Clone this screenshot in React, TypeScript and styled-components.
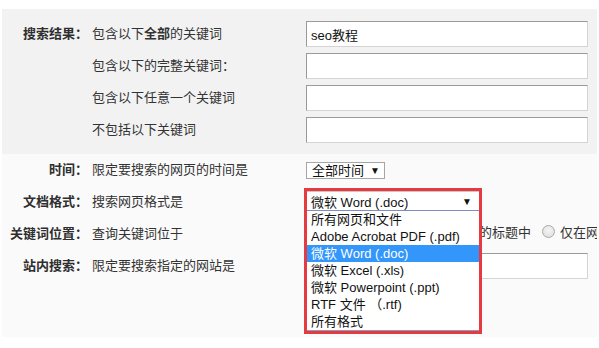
import React from "react";
import styled, { createGlobalStyle } from "styled-components";

const Global = createGlobalStyle`
  html, body { margin: 0; padding: 0; background: #ffffff; overflow: hidden; }
  body { font-family: "Liberation Sans", "Noto Sans CJK SC", sans-serif; font-size: 13px; color: #333; }
`;

const Page = styled.div`
  padding: 9px 0 0 2px;
  width: 595px;
  overflow: hidden;
`;

const Panel = styled.div<{ $tone: "dark" | "light" }>`
  background: ${(p) => (p.$tone === "dark" ? "#f2f2f2" : "#fafafa")};
  padding: ${(p) => (p.$tone === "dark" ? "12px 0 11px" : "0 0 55px")};
  display: grid;
  row-gap: ${(p) => (p.$tone === "dark" ? "6px" : "0")};
`;

const Row = styled.div<{ $h: number }>`
  display: grid;
  grid-template-columns: 86px 218px 291px;
  align-items: center;
  height: ${(p) => p.$h}px;
`;

const Label = styled.div`
  text-align: right;
  font-weight: bold;
  color: #2e2e2e;
  white-space: nowrap;
  margin-bottom: 4px;
`;

const Desc = styled.div`
  padding-left: 4px;
  white-space: nowrap;
  color: #333;
  margin-bottom: 4px;
`;

const Control = styled.div<{ $lift?: boolean }>`
  position: relative;
  display: flex;
  align-items: center;
  white-space: nowrap;
  height: 100%;
  box-sizing: border-box;
  padding-bottom: ${(p) => (p.$lift ? "5px" : "0")};
`;

const TextInput = styled.div`
  box-sizing: border-box;
  width: 282px;
  height: 26px;
  background: #fff;
  border: 1px solid;
  border-color: #9a9a9a #d4d4d4 #d4d4d4 #9a9a9a;
  padding-left: 4px;
  display: flex;
  align-items: center;
  color: #111;
  font-size: 13px;
`;

const SmallSelect = styled.div`
  box-sizing: border-box;
  height: 17px;
  border: 1px solid #a6a6a6;
  background: #fff;
  padding: 0 4px 0 5px;
  display: flex;
  align-items: center;
  gap: 6px;
  color: #111;
  line-height: 15px;
`;

const Arrow = styled.span`
  font-size: 10px;
  color: #111;
`;

const Radio = styled.span<{ $gap: number }>`
  box-sizing: border-box;
  width: 13px;
  height: 13px;
  border-radius: 50%;
  border: 1px solid #a9a9a9;
  background: radial-gradient(circle at 50% 40%, #f4f4f4 0%, #dcdcdc 100%);
  margin: 0 5px 0 ${(p) => p.$gap}px;
  flex: none;
`;

const RadioText = styled.span`
  color: #333;
`;

const Dropdown = styled.div`
  position: absolute;
  left: -2px;
  top: 2px;
  width: 172px;
  border: 3px solid #e53a3f;
  background: #fff;
  z-index: 5;
  color: #111;
`;

const DropHead = styled.div`
  box-sizing: border-box;
  height: 20px;
  border-top: 1px solid #c8c8c8;
  border-bottom: 1px solid #7b8fbf;
  padding: 0 7px 0 4px;
  display: flex;
  align-items: center;
  justify-content: space-between;
  background: #fff;
`;

const List = styled.div`
  border-bottom: 1px solid #8a9bc4;
`;

const Item = styled.div<{ $active?: boolean }>`
  height: 17px;
  line-height: 17px;
  padding-left: 4px;
  background: ${(p) => (p.$active ? "#3296fa" : "#fff")};
  color: ${(p) => (p.$active ? "#fff" : "#111")};
  white-space: nowrap;
`;

const options = [
  "所有网页和文件",
  "Adobe Acrobat PDF (.pdf)",
  "微软 Word (.doc)",
  "微软 Excel (.xls)",
  "微软 Powerpoint (.ppt)",
  "RTF 文件 （.rtf)",
  "所有格式",
];

export default function App() {
  return (
    <>
      <Global />
      <Page>
        <Panel $tone="dark">
          <Row $h={26}>
            <Label>搜索结果：</Label>
            <Desc>
              包含以下<b>全部</b>的关键词
            </Desc>
            <Control>
              <TextInput>seo教程</TextInput>
            </Control>
          </Row>
          <Row $h={26}>
            <Label />
            <Desc>包含以下的完整关键词：</Desc>
            <Control>
              <TextInput />
            </Control>
          </Row>
          <Row $h={26}>
            <Label />
            <Desc>包含以下任意一个关键词</Desc>
            <Control>
              <TextInput />
            </Control>
          </Row>
          <Row $h={26}>
            <Label />
            <Desc>不包括以下关键词</Desc>
            <Control>
              <TextInput />
            </Control>
          </Row>
        </Panel>
        <Panel $tone="light">
          <Row $h={32}>
            <Label>时间：</Label>
            <Desc>限定要搜索的网页的时间是</Desc>
            <Control>
              <SmallSelect>
                全部时间 <Arrow>▼</Arrow>
              </SmallSelect>
            </Control>
          </Row>
          <Row $h={32}>
            <Label>文档格式：</Label>
            <Desc>搜索网页格式是</Desc>
            <Control>
              <Dropdown>
                <DropHead>
                  <span>微软 Word (.doc)</span>
                  <Arrow>▼</Arrow>
                </DropHead>
                <List>
                  {options.map((o, i) => (
                    <Item key={o} $active={i === 2}>
                      {o}
                    </Item>
                  ))}
                </List>
              </Dropdown>
            </Control>
          </Row>
          <Row $h={32}>
            <Label>关键词位置：</Label>
            <Desc>查询关键词位于</Desc>
            <Control $lift>
              <Radio $gap={3} />
              <RadioText>网页的任何地方</RadioText>
              <Radio $gap={4} />
              <RadioText>仅网页的标题中</RadioText>
              <Radio $gap={11} />
              <RadioText>仅在网页的URL中</RadioText>
            </Control>
          </Row>
          <Row $h={32}>
            <Label>站内搜索：</Label>
            <Desc>限定要搜索指定的网站是</Desc>
            <Control>
              <TextInput />
            </Control>
          </Row>
        </Panel>
      </Page>
    </>
  );
}
